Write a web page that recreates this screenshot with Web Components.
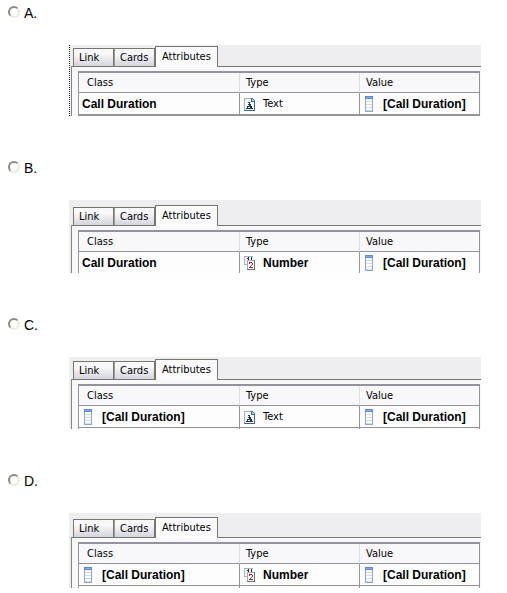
<!DOCTYPE html>
<html lang="en">
<head>
<meta charset="utf-8">
<meta name="viewport" content="width=device-width, initial-scale=1">
<title>Question</title>
<style>
    body {
        margin: 0;
        background: #fff;
        color: #000;
        font-family: "Liberation Sans", Arial, sans-serif;
    }
</style>
</head>
<body>
<answer-list>
    <answer-option letter="A">
        <tab-panel headroom="1" focused>
            <attribute-grid ending="closed">
                <grid-value slot="class" strong>Call Duration</grid-value>
                <grid-value slot="type" icon="text">Text</grid-value>
                <grid-value slot="value" icon="column" strong>[Call Duration]</grid-value>
            </attribute-grid>
        </tab-panel>
    </answer-option>
    <answer-option letter="B">
        <tab-panel headroom="5">
            <attribute-grid ending="open">
                <grid-value slot="class" strong>Call Duration</grid-value>
                <grid-value slot="type" icon="number" strong>Number</grid-value>
                <grid-value slot="value" icon="column" strong>[Call Duration]</grid-value>
            </attribute-grid>
        </tab-panel>
    </answer-option>
    <answer-option letter="C">
        <tab-panel headroom="2">
            <attribute-grid ending="next" tail="1">
                <grid-value slot="class" icon="column" strong>[Call Duration]</grid-value>
                <grid-value slot="type" icon="text">Text</grid-value>
                <grid-value slot="value" icon="column" strong>[Call Duration]</grid-value>
            </attribute-grid>
        </tab-panel>
    </answer-option>
    <answer-option letter="D">
        <tab-panel headroom="4">
            <attribute-grid ending="next" tail="2">
                <grid-value slot="class" icon="column" strong>[Call Duration]</grid-value>
                <grid-value slot="type" icon="number" strong>Number</grid-value>
                <grid-value slot="value" icon="column" strong>[Call Duration]</grid-value>
            </attribute-grid>
        </tab-panel>
    </answer-option>
</answer-list>

<script>
const ICONS = {
    text: `
        <svg width="16" height="16" viewBox="0 0 16 16" shape-rendering="crispEdges">
            <path d="M1 2h8l3 3v10H1z" fill="#f4f8fa"/>
            <path d="M1 2h8v1H2v11H1z" fill="#a4b4c0"/>
            <path d="M9 2h1v1h1v1h1v11H1v-1h10V6H8V2z" fill="#3c6c80"/>
            <path d="M9 3h1v1h1v1H9z" fill="#b8d8e8"/>
            <path d="M5 6h2v2h1v2h1v2h1v1H6v-1h1v-1H5v1h1v1H3v-1h1v-2h1V8h1V7H5zM5 9v1h1V9z" fill="#203848" fill-rule="evenodd"/>
        </svg>`,
    number: `
        <svg width="16" height="16" viewBox="0 0 16 16" shape-rendering="crispEdges">
            <rect x="1" y="1" width="9" height="9" fill="#f2f5f8"/>
            <path d="M1 1h9v1H2v7h2v1H1z" fill="#a8b0c0"/>
            <path d="M5 2h1v3H5zM4 3h1v1H4zM8 2h1v3H8z" fill="#202838"/>
            <rect x="4" y="5" width="8" height="10" fill="#607088"/>
            <rect x="4" y="5" width="7" height="9" fill="#fff"/>
            <path d="M4 5h7v1H5v8H4z" fill="#a0a8b8"/>
            <path d="M6 7h3v1H6zM9 8h1v2H9zM8 10h1v1H8zM7 11h1v1H7zM6 12h4v1H6zM6 8h1v1H6z" fill="#c41818"/>
        </svg>`,
    column: `
        <svg width="16" height="16" viewBox="0 0 16 16" shape-rendering="crispEdges">
            <rect x="2" y="0" width="8" height="16" fill="#90a4d0"/>
            <rect x="3" y="3" width="6" height="12" fill="#fff"/>
            <rect x="2" y="0" width="8" height="3" fill="#5c88e0"/>
            <rect x="3" y="1" width="6" height="1" fill="#88acf0"/>
            <path d="M3 5h6v1H3zM3 8h6v1H3zM3 11h6v1H3zM3 14h6v1H3z" fill="#d0daee"/>
        </svg>`
};

class AnswerList extends HTMLElement {
    constructor() {
        super();
        this.attachShadow({ mode: 'open' });
        this.shadowRoot.innerHTML = `
            <style>
                :host {
                    display: flex;
                    flex-direction: column;
                    gap: 44px;
                    padding: 5px 26px 5px 8px;
                }
            </style>
            <slot></slot>
        `;
        // radios live in separate shadow roots, so the group is kept here
        this.addEventListener('option-picked', event => {
            this.querySelectorAll('answer-option').forEach(option => {
                option.checked = option === event.target;
            });
        });
    }
}

class AnswerOption extends HTMLElement {
    constructor() {
        super();
        this.attachShadow({ mode: 'open' });
        this.shadowRoot.innerHTML = `
            <style>
                :host {
                    display: flex;
                    flex-direction: column;
                    gap: 24px;
                }
                .choice {
                    display: flex;
                    align-items: flex-start;
                    gap: 4px;
                    height: 16px;
                    font-size: 14px;
                    line-height: 17px;
                }
                input {
                    appearance: none;
                    box-sizing: border-box;
                    width: 12px;
                    height: 12px;
                    margin: 1px 0 0;
                    border: 2px solid;
                    border-color: #8c8a80 #ece9dc #ece9dc #8c8a80;
                    border-radius: 50%;
                    background: #fff;
                }
                input:checked {
                    background: radial-gradient(#000 2px, #fff 3px);
                }
                .content {
                    padding-left: 61px;
                }
            </style>
            <div class="choice">
                <input type="radio" id="pick">
                <label for="pick"></label>
            </div>
            <div class="content"><slot></slot></div>
        `;
        this.input = this.shadowRoot.querySelector('input');
        this.input.addEventListener('change', () => {
            this.dispatchEvent(new CustomEvent('option-picked', { bubbles: true }));
        });
    }

    connectedCallback() {
        this.shadowRoot.querySelector('label').textContent = this.getAttribute('letter') + '.';
    }

    set checked(value) {
        this.input.checked = value;
    }
}

class TabPanel extends HTMLElement {
    constructor() {
        super();
        this.attachShadow({ mode: 'open' });
        this.shadowRoot.innerHTML = `
            <style>
                :host {
                    display: block;
                    background: #eeeef1;
                    font-family: "DejaVu Sans Condensed", Tahoma, sans-serif;
                    font-size: 11px;
                }
                :host([focused]) {
                    background: linear-gradient(#223 50%, #fff 50%) 0 0 / 1px 2px repeat-y, #eeeef1;
                }
                .tabs {
                    display: flex;
                    align-items: flex-end;
                    padding-left: 4px;
                }
                button {
                    box-sizing: border-box;
                    min-width: 41px;
                    height: 18px;
                    margin: 0;
                    padding: 0 5px;
                    border: 1px solid #74776a;
                    border-bottom: 0;
                    background: linear-gradient(#f8f8fa 30%, #d4d4dc);
                    color: #000;
                    font: inherit;
                    line-height: 18px;
                    text-align: left;
                }
                button + button {
                    border-left-color: #9a9c96;
                }
                button[aria-selected="true"] {
                    position: relative;
                    height: 21px;
                    margin-bottom: -1px;
                    padding: 0 6px 1px;
                    border-color: #74776a;
                    background: #fbfbfd;
                }
                .body {
                    margin-left: 2px;
                    padding: 4px 1px 0 6px;
                    border-top: 1px solid #74776a;
                    border-left: 1px solid #85877e;
                    background: #f8f8fb;
                }
            </style>
            <div class="tabs" role="tablist">
                <button type="button" role="tab">Link</button>
                <button type="button" role="tab">Cards</button>
                <button type="button" role="tab" aria-selected="true">Attributes</button>
            </div>
            <div class="body" role="tabpanel"><slot></slot></div>
        `;
    }

    connectedCallback() {
        this.shadowRoot.querySelector('.tabs').style.paddingTop = this.getAttribute('headroom') + 'px';
    }
}

class AttributeGrid extends HTMLElement {
    constructor() {
        super();
        this.attachShadow({ mode: 'open' });
        this.shadowRoot.innerHTML = `
            <style>
                :host {
                    display: block;
                }
                table {
                    width: 100%;
                    table-layout: fixed;
                    border: 1px solid #92939b;
                    border-top-width: 2px;
                    border-bottom-width: 0;
                    border-spacing: 0;
                    background: #fdfdfe;
                }
                th, td {
                    box-sizing: border-box;
                    padding: 0;
                    border-left: 1px solid #92939b;
                    text-align: left;
                }
                th {
                    height: 20px;
                    padding-left: 6px;
                    border-bottom: 1px solid #92939b;
                    border-left-color: #dcdce2;
                    background: #f8f8fa;
                    font-weight: normal;
                    line-height: 19px;
                }
                th:first-child, td:first-child {
                    border-left: 0;
                }
                th:first-child {
                    padding-left: 8px;
                }
                .class {
                    width: 40%;
                }
                .type {
                    width: 30%;
                }
                tfoot {
                    display: none;
                }
                :host([ending="closed"]) table {
                    border-bottom-width: 2px;
                }
                :host([ending="next"]) td {
                    border-bottom: 1px solid #92939b;
                }
                :host([ending="next"]) tfoot {
                    display: table-footer-group;
                }
                :host([ending="next"]) tfoot td {
                    height: var(--tail);
                    border-bottom: 0;
                }
            </style>
            <table>
                <thead>
                    <tr><th class="class">Class</th><th class="type">Type</th><th>Value</th></tr>
                </thead>
                <tbody>
                    <tr>
                        <td><slot name="class"></slot></td>
                        <td><slot name="type"></slot></td>
                        <td><slot name="value"></slot></td>
                    </tr>
                </tbody>
                <tfoot aria-hidden="true">
                    <tr><td></td><td></td><td></td></tr>
                </tfoot>
            </table>
        `;
    }

    connectedCallback() {
        this.style.setProperty('--tail', (this.getAttribute('tail') || 0) + 'px');
    }
}

class GridValue extends HTMLElement {
    constructor() {
        super();
        this.attachShadow({ mode: 'open' });
        this.shadowRoot.innerHTML = `
            <style>
                :host {
                    display: flex;
                    align-items: center;
                    gap: 4px;
                    height: 21px;
                    padding-left: 3px;
                    white-space: nowrap;
                }
                :host([strong]) {
                    font-family: "Liberation Sans", Arial, sans-serif;
                    font-size: 12px;
                    font-weight: bold;
                }
                svg {
                    display: block;
                }
            </style>
            <span class="icon" hidden></span>
            <span><slot></slot></span>
        `;
    }

    connectedCallback() {
        const markup = ICONS[this.getAttribute('icon')];
        if (markup) {
            const icon = this.shadowRoot.querySelector('.icon');
            icon.innerHTML = markup;
            icon.hidden = false;
        }
    }
}

customElements.define('answer-list', AnswerList);
customElements.define('answer-option', AnswerOption);
customElements.define('tab-panel', TabPanel);
customElements.define('attribute-grid', AttributeGrid);
customElements.define('grid-value', GridValue);
</script>
</body>
</html>
